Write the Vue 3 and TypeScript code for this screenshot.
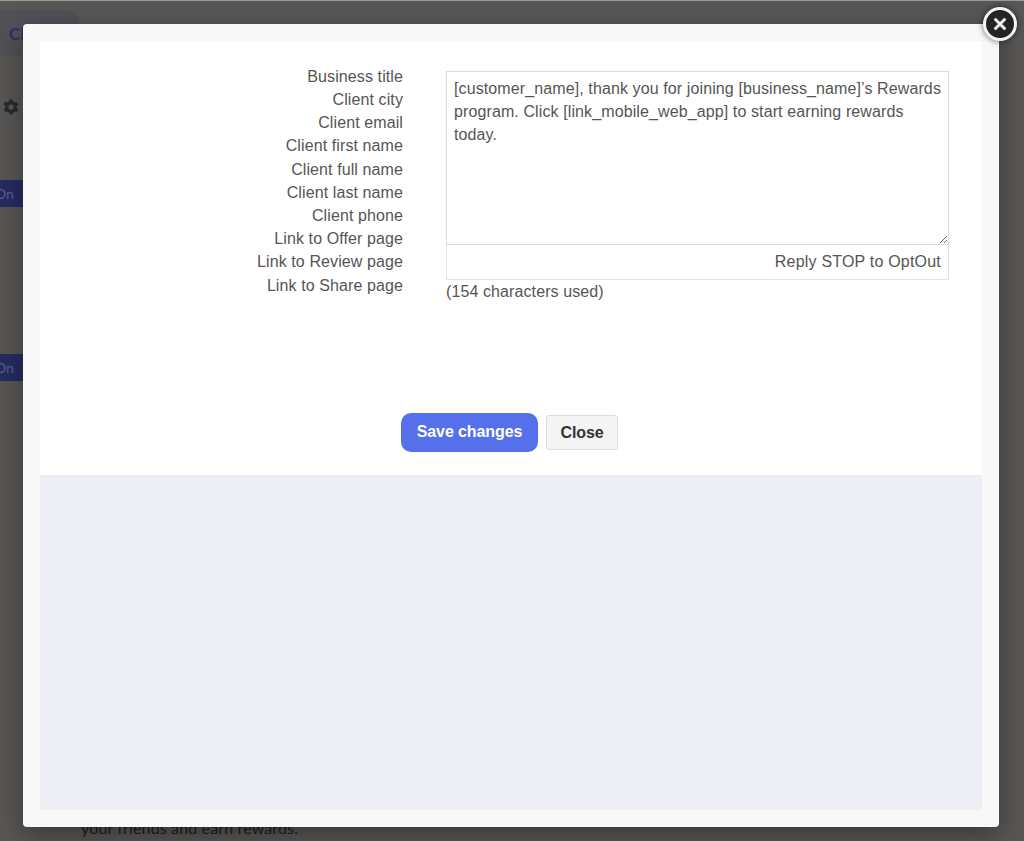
<script setup lang="ts">
const fields: string[] = [
  'Business title', 'Client city', 'Client email', 'Client first name', 'Client full name',
  'Client last name', 'Client phone', 'Link to Offer page', 'Link to Review page', 'Link to Share page'
]
const message = "[customer_name], thank you for joining [business_name]’s Rewards program. Click [link_mobile_web_app] to start earning rewards today."
</script>

<template>
  <div class="page">
    <div class="behind">
      <div class="tab"><span>Cl</span></div>
      <svg class="gear" viewBox="0 0 24 24" width="18" height="18" aria-hidden="true">
        <path fill="#2b2b2f" d="M19.4 13a7.6 7.6 0 0 0 0-2l2.1-1.6a.5.5 0 0 0 .1-.6l-2-3.5a.5.5 0 0 0-.6-.2l-2.5 1a7.3 7.3 0 0 0-1.7-1l-.4-2.6a.5.5 0 0 0-.5-.4h-4a.5.5 0 0 0-.5.4l-.4 2.6a7.3 7.3 0 0 0-1.7 1l-2.5-1a.5.5 0 0 0-.6.2l-2 3.5a.5.5 0 0 0 .1.6L4.6 11a7.6 7.6 0 0 0 0 2l-2.1 1.6a.5.5 0 0 0-.1.6l2 3.5c.1.2.4.3.6.2l2.5-1c.5.4 1.1.7 1.7 1l.4 2.6c0 .2.3.4.5.4h4c.2 0 .5-.2.5-.4l.4-2.6c.6-.3 1.2-.6 1.7-1l2.5 1c.2.1.5 0 .6-.2l2-3.5a.5.5 0 0 0-.1-.6L19.4 13zM12 15.5a3.5 3.5 0 1 1 0-7 3.5 3.5 0 0 1 0 7z"/>
      </svg>
      <div class="badge first">On</div>
      <div class="badge second">On</div>
      <p class="tail">your friends and earn rewards.</p>
    </div>

    <div class="modal">
      <button class="dismiss" type="button" aria-label="Close">
        <svg viewBox="0 0 16 16" width="16" height="16" aria-hidden="true">
          <path d="M3.5 3.5l9 9M12.5 3.5l-9 9" stroke="#f2f2f2" stroke-width="3" stroke-linecap="round" fill="none"/>
        </svg>
      </button>
      <div class="content">
        <div class="editor">
          <ul class="fields">
            <li v-for="field in fields" :key="field">{{ field }}</li>
          </ul>
          <div class="composer">
            <textarea class="message" :value="message"></textarea>
            <div class="suffix">Reply STOP to OptOut</div>
            <div class="count">(154 characters used)</div>
          </div>
        </div>
        <div class="actions">
          <button class="save" type="button">Save changes</button>
          <button class="close" type="button">Close</button>
        </div>
        <div class="lower"></div>
      </div>
    </div>
  </div>
</template>

<style>
html, body { margin: 0; background: #565452; }
</style>

<style scoped>
.page {
  position: relative;
  width: 1024px;
  height: 841px;
  overflow: hidden;
  font-family: "Liberation Sans", Arial, sans-serif;
  background: #595755;
  border-top: 1px solid #9a9a9a;
  box-sizing: border-box;
}
.behind {
  display: flex;
  flex-direction: column;
  align-items: flex-start;
  height: 100%;
  padding-top: 9px;
  box-sizing: border-box;
}
.tab {
  width: 79px;
  height: 46px;
  border-radius: 0 12px 0 0;
  background: #525157;
  color: #2c3264;
  font: 700 17px Lato, sans-serif;
  display: flex;
  align-items: center;
  padding-left: 9px;
  box-sizing: border-box;
}
.gear { margin: 42px 0 0 2px; }
.badge {
  width: 23px;
  height: 27px;
  background: #262c62;
  color: #5c6088;
  font: 14px/27px Lato, sans-serif;
  text-indent: -5px;
  overflow: hidden;
}
.first { margin-top: 64px; }
.second { margin-top: 147px; }
.tail {
  margin: 437px 0 0 81px;
  color: #1f1e1e;
  font: 16px/20px Lato, sans-serif;
  letter-spacing: 0.14px;
}
.modal {
  position: absolute;
  left: 23px;
  top: 23px;
  width: 976px;
  height: 803px;
  padding: 17px;
  box-sizing: border-box;
  background: #f8f8f8;
  border-radius: 4px;
  box-shadow: 0 8px 28px rgba(0, 0, 0, 0.38);
}
.dismiss {
  position: absolute;
  top: -17px;
  right: -18px;
  width: 34px;
  height: 34px;
  padding: 0;
  border: 3px solid #f4f4f4;
  border-radius: 50%;
  background: #242424;
  box-shadow: 0 0 6px rgba(0, 0, 0, 0.6);
  display: flex;
  align-items: center;
  justify-content: center;
}
.content {
  height: 100%;
  display: flex;
  flex-direction: column;
  background: #fff;
  color: #555;
  font-size: 16px;
}
.editor {
  display: flex;
  padding-top: 23.8px;
  height: 348px;
  box-sizing: border-box;
}
.fields {
  list-style: none;
  margin: 0;
  padding: 0;
  width: 363px;
  text-align: right;
  line-height: 23.2px;
  letter-spacing: 0.1px;
  flex: none;
}
.composer {
  margin-left: 43px;
  margin-top: 6.2px;
  width: 503px;
}
.message {
  display: block;
  width: 100%;
  height: 174px;
  margin: 0;
  padding: 5px 7px;
  box-sizing: border-box;
  border: 1px solid #dcdcdc;
  border-radius: 0;
  outline: none;
  color: #555;
  font: 16px/23px "Liberation Sans", Arial, sans-serif;
  letter-spacing: 0.11px;
  background: #fff;
}
.suffix {
  height: 35px;
  padding: 0 7px;
  box-sizing: border-box;
  border: 1px solid #e2e2e2;
  border-top: 0;
  text-align: right;
  line-height: 34px;
  letter-spacing: 0.2px;
}
.count {
  line-height: 23px;
  letter-spacing: 0.1px;
}
.actions {
  display: flex;
  justify-content: center;
  align-items: center;
  gap: 8px;
  height: 86px;
  padding: 0 3px 0 0;
  box-sizing: border-box;
}
.save {
  width: 137px;
  height: 39px;
  border: 0;
  border-radius: 10px;
  background: #5570ea;
  color: #fff;
  font: 700 16px "Liberation Sans", Arial, sans-serif;
  letter-spacing: -0.1px;
}
.close {
  width: 72px;
  height: 35px;
  margin-top: 1px;
  border: 1px solid #dcdcdc;
  border-radius: 3px;
  background: #f4f4f4;
  color: #333;
  font: 700 16px "Liberation Sans", Arial, sans-serif;
  letter-spacing: -0.1px;
}
.lower {
  flex: 1;
  background: #eeeff5;
}
</style>
